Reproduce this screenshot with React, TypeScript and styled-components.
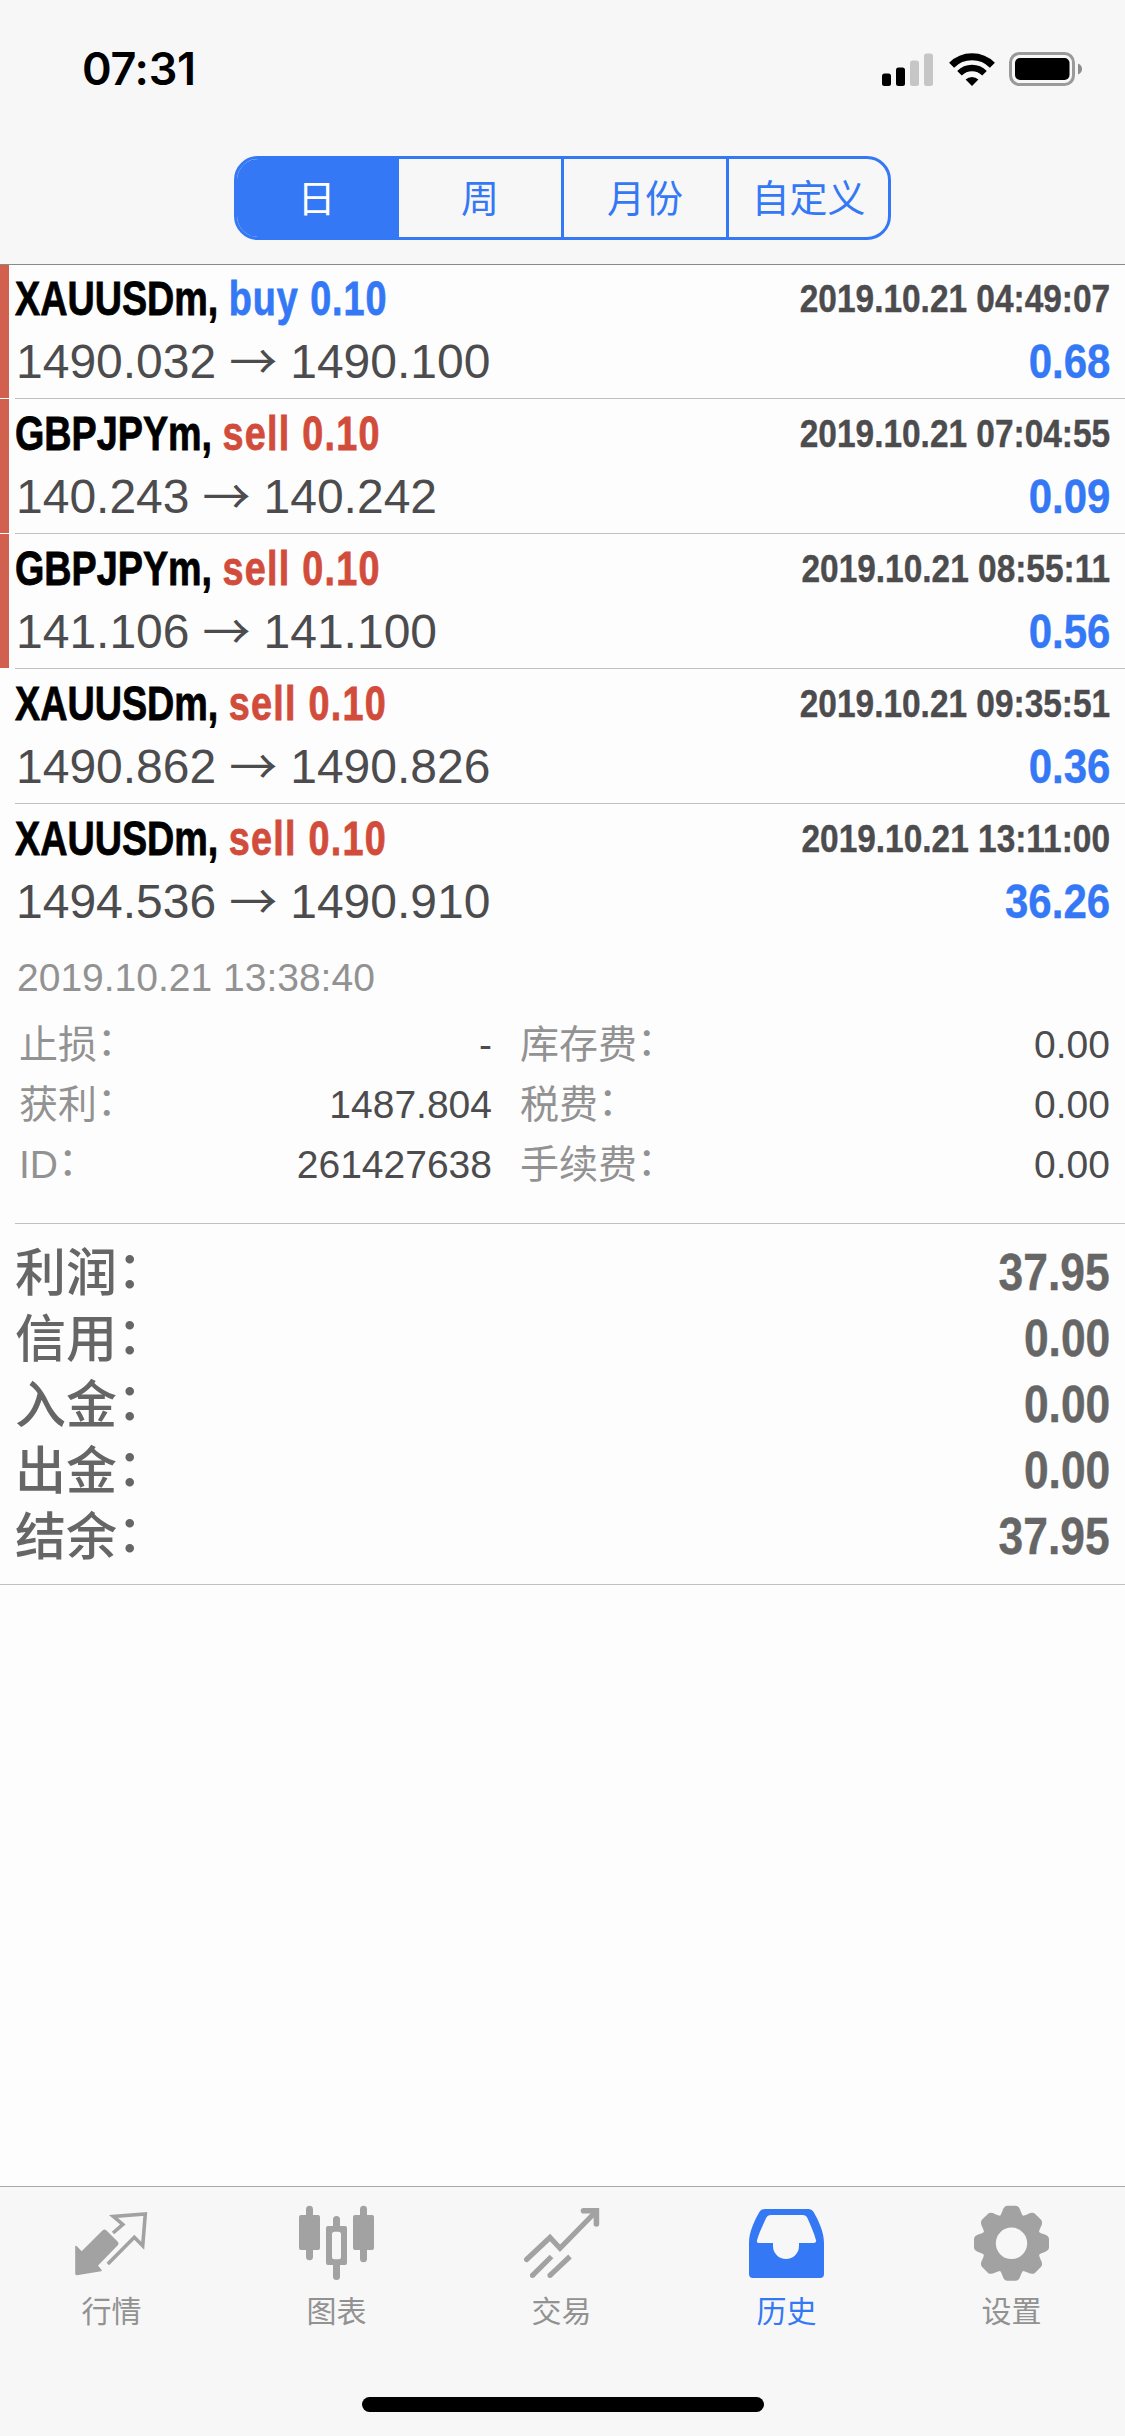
import React from "react";
import styled, { createGlobalStyle } from "styled-components";

const BLUE = "#3478f6";
const RED = "#d24c3b";
const LATIN = `"Liberation Sans", "Noto Sans CJK SC", sans-serif`;
const CJK = `"Noto Sans CJK SC", "Liberation Sans", sans-serif`;

const GlobalStyle = createGlobalStyle`
  html, body { margin: 0; padding: 0; background: #fdfdfd; }
  * { box-sizing: border-box; }
`;

const Screen = styled.div`
  display: flex;
  flex-direction: column;
  width: 1125px;
  height: 2436px;
  background: #fdfdfd;
  font-family: ${LATIN};
  overflow: hidden;
`;

const Header = styled.header`
  position: relative;
  z-index: 1;
  flex: none;
  height: 264px;
  background: #f7f7f7;
  box-shadow: 0 1px 0 #8a8a8a;
  display: flex;
  flex-direction: column;
  align-items: center;
`;

const StatusBar = styled.div`
  width: 100%;
  height: 156px;
  padding: 41px 42px 0 82px;
  display: flex;
  justify-content: space-between;
  align-items: flex-start;
`;

const Clock = styled.div`
  font: 600 45px/56px Inter, "Liberation Sans", sans-serif;
  letter-spacing: -0.3px;
  color: #000;
`;

const StatusIcons = styled.div`
  display: flex;
  align-items: flex-end;
  gap: 14.5px;
  padding-top: 11px;
  svg { display: block; }
`;

const Segments = styled.div`
  display: grid;
  grid-template-columns: 159px 165px 165px 162px;
  width: 657px;
  height: 84px;
  border: 3px solid ${BLUE};
  border-radius: 24px;
  overflow: hidden;
`;

const Segment = styled.button<{ $active?: boolean }>`
  border: 0;
  padding: 0 0 5px;
  font: 400 38px/1 ${CJK};
  color: ${(p) => (p.$active ? "#fff" : BLUE)};
  background: ${(p) => (p.$active ? BLUE : "transparent")};
  & + & { border-left: 3px solid ${BLUE}; }
`;

const List = styled.main`
  flex: 1;
  display: flex;
  flex-direction: column;
`;

const DealRow = styled.article<{ $marked?: boolean; $open?: boolean }>`
  flex: none;
  height: ${(p) => (p.$open ? 420 : 135)}px;
  display: flex;
  &::before {
    content: "";
    width: 9px;
    height: 134px;
    background: ${(p) => (p.$marked ? "#d2604f" : "transparent")};
  }
`;

const DealBody = styled.div`
  flex: 1;
  margin-left: 6px;
  padding: 3px 15px 0 0;
  border-bottom: 1px solid #c0c0c0;
`;

const Line = styled.div`
  height: 63px;
  display: flex;
  justify-content: space-between;
  line-height: 63px;
  white-space: nowrap;
`;

const Symbol = styled.div`
  font-size: 48px;
  font-weight: 700;
  color: #000;
  -webkit-text-stroke: 0.8px;
  transform: scaleX(0.786);
  transform-origin: 0 50%;
`;

const Side = styled.span<{ $buy?: boolean }>`
  color: ${(p) => (p.$buy ? BLUE : RED)};
  letter-spacing: ${(p) => (p.$buy ? 1.2 : 1.6)}px;
`;

const Condensed = styled.div<{ $size: number; $color: string; $scale: number }>`
  font-size: ${(p) => p.$size}px;
  font-weight: 700;
  color: ${(p) => p.$color};
  -webkit-text-stroke: 0.4px;
  transform: scaleX(${(p) => p.$scale});
  transform-origin: 100% 50%;
`;

const Prices = styled.div`
  display: flex;
  gap: 13px;
  padding-left: 1px;
  font-size: 48px;
  color: #4c4c4e;
`;

const Arrow = styled.span`
  width: 48px;
  height: 56px;
  line-height: 56px;
  font-family: ${CJK};
`;

const OpenTime = styled.div`
  margin-top: 15px;
  padding-left: 2px;
  height: 60px;
  font-size: 39px;
  line-height: 60px;
  color: #929292;
`;

const Details = styled.dl`
  margin: 7px 0 0;
  padding-left: 4px;
  display: grid;
  grid-template-columns: 473px 1fr;
  column-gap: 28px;
`;

const Detail = styled.div`
  display: flex;
  justify-content: space-between;
  height: 60px;
  line-height: 60px;
  font-size: 39px;
`;

const Label = styled.dt`
  color: #929292;
`;

const Value = styled.dd`
  margin: 0;
  color: #4c4c4e;
`;

const Colon = styled.span<{ $lift: number }>`
  position: relative;
  top: -${(p) => p.$lift}px;
`;

const Summary = styled.section`
  height: 361px;
  padding: 16px 15px 0;
  border-bottom: 1px solid #c0c0c0;
`;

const SummaryRow = styled.div`
  height: 66px;
  line-height: 66px;
  display: flex;
  justify-content: space-between;
`;

const SummaryLabel = styled.div`
  height: 58px;
  font: 500 51px/58px ${CJK};
  color: #666;
`;

const TabBar = styled.nav`
  flex: none;
  height: 250px;
  background: #f7f7f7;
  border-top: 1px solid #a8a8a8;
  display: grid;
  grid-template-columns: repeat(5, 225px);
  grid-template-rows: 210px 15px;
`;

const Tab = styled.a<{ $active?: boolean }>`
  padding-top: 13px;
  display: flex;
  flex-direction: column;
  color: ${(p) => (p.$active ? BLUE : "#a2a2a2")};
  svg { display: block; }
`;

const TabLabel = styled.span<{ $active?: boolean }>`
  padding-right: 2px;
  text-align: center;
  font: 400 30px/39px ${CJK};
  color: ${(p) => (p.$active ? BLUE : "#929292")};
`;

const HomeIndicator = styled.div`
  grid-column: 1 / -1;
  justify-self: center;
  width: 402px;
  height: 15px;
  border-radius: 8px;
  background: #000;
`;

const SignalIcon = () => (
  <svg width="52" height="33" viewBox="0 0 52 33">
    <rect x="0" y="20.5" width="9" height="12.5" rx="2.5" />
    <rect x="14" y="14.5" width="9" height="18.5" rx="2.5" />
    <rect x="28" y="7.5" width="9" height="25.5" rx="2.5" fill="#c6c6c6" />
    <rect x="42" y="0.5" width="9" height="32.5" rx="2.5" fill="#c6c6c6" />
  </svg>
);

const WifiIcon = () => (
  <svg width="46" height="33" viewBox="0 0 46 33">
    <g fill="none" stroke="#000">
      <path d="M2.6 12.2a28.8 28.8 0 0 1 40.8 0" strokeWidth="7" />
      <path d="M10.5 20.200a17.600 17.600 0 0 1 25 0" strokeWidth="6.400" />
    </g>
    <path d="M23 33l-6.4-6.4a9 9 0 0 1 12.8 0z" />
  </svg>
);

const BatteryIcon = () => (
  <svg width="74" height="34" viewBox="0 0 74 34">
    <rect x="1.5" y="1.5" width="63" height="31" rx="9" fill="none" stroke="#9a9a9a" strokeWidth="3" />
    <rect x="6" y="6" width="54.5" height="22" rx="5" />
    <path d="M69 11.5q4 1.8 4 5.5t-4 5.5z" fill="#8c8c8c" />
  </svg>
);

const QuotesIcon = () => (
  <svg width="225" height="90" viewBox="0 0 225 90">
    <path
      d="M76 46.6l5.7 5.6 21.6-21.4q1.2-1 2.4 0l11.5 11.6q1.1 1.2 0 2.4L97 65.5l4 4.9-24.2 4q-.8 0-.8-.8z"
      fill="currentColor" stroke="currentColor" strokeWidth="1.6" strokeLinejoin="round"
    />
    <path d="M113 33l9.8-8.6-9.4-8L145.300 13.900 142.700 45.700 134.300 37.300 107.800 64" fill="none" stroke="currentColor" strokeWidth="3.6" />
  </svg>
);

const ChartIcon = () => (
  <svg width="225" height="90" viewBox="0 0 225 90" fill="currentColor">
    <rect x="74" y="15" width="21" height="35" rx="2" />
    <rect x="81" y="5.700" width="7" height="54.500" rx="3.500" />
    <rect x="128" y="15" width="21" height="35" rx="2" />
    <rect x="135" y="5.700" width="7" height="56.500" rx="3.500" />
    <path d="M103 26h5v-6.500a3.500 3.500 0 0 1 7 0V26h5a2 2 0 0 1 2 2v35a2 2 0 0 1-2 2h-5v11.500a3.500 3.500 0 0 1-7 0V65h-5a2 2 0 0 1-2-2V28a2 2 0 0 1 2-2zm6.500 5.700a2.500 2.500 0 0 0-2.500 2.500v22.600a2.500 2.500 0 0 0 2.500 2.500h4a2.500 2.500 0 0 0 2.500-2.500V34.200a2.500 2.500 0 0 0-2.500-2.500z" fillRule="evenodd" />
  </svg>
);

const TradeIcon = () => (
  <svg width="225" height="90" viewBox="0 0 225 90" fill="none" stroke="currentColor" strokeWidth="5.200">
    <path d="M76.600 59.500L100 37.500 110 48.200 145.500 12" strokeLinecap="round" />
    <path d="M133.500 10.700H146.400V24" strokeLinecap="round" strokeWidth="5.600" />
    <path d="M82.500 75.300L101.500 56.500M100 75.300L120 56.500" />
    <path d="M82.500 75.300h.01M100 75.300h.01" strokeLinecap="round" />
  </svg>
);

const HistoryIcon = () => (
  <svg width="225" height="90" viewBox="0 0 225 90" fill="currentColor" fillRule="evenodd">
    <path d="M90 9H133.500Q136.800 9 138.300 11.600C143.500 20.500 149 32 149 43V74Q149 78 145 78H78Q74 78 74 74V43C74 32 79.500 20.500 84.700 11.600Q86.200 9 90 9ZM96 15Q92.600 15 91 18.300C87.500 26 84 33 82 40.300Q81.500 43 84 43H98V46A13 13 0 0 0 124 46V43H138.500Q141.700 43 141 40.300C139 33 136 26 132.500 18.300Q131 15 127.500 15Z" />
  </svg>
);

const TEETH = [0, 45, 90, 135, 180, 225, 270, 315];

const gearOutline = () => {
  const points: [number, number][] = [
    [-11.4, -27.6], [-10.2, -29], [-9.2, -32],
    [-7.6, -37.5], [-4, -37.5],
    [4, -37.5], [7.6, -37.5], [9.2, -32],
    [10.2, -29], [11.4, -27.6],
  ];
  let d = "";
  TEETH.forEach((deg, i) => {
    const a = (deg * Math.PI) / 180;
    const p = points.map(([x, y]) =>
      `${(111.5 + x * Math.cos(a) - y * Math.sin(a)).toFixed(2)} ${(43.3 + x * Math.sin(a) + y * Math.cos(a)).toFixed(2)}`
    );
    d += `${i ? "L" : "M"}${p[0]}Q${p[1]} ${p[2]}Q${p[3]} ${p[4]}L${p[5]}Q${p[6]} ${p[7]}Q${p[8]} ${p[9]}`;
  });
  return `${d}ZM95.800 43.300a15.700 15.700 0 1 0 31.400 0a15.700 15.700 0 1 0-31.400 0Z`;
};

const SettingsIcon = () => (
  <svg width="225" height="90" viewBox="0 0 225 90" fill="currentColor" fillRule="evenodd">
    <path d={gearOutline()} />
  </svg>
);

type Deal = {
  symbol: string; side: "buy" | "sell"; from: string; to: string;
  time: string; profit: string; marked?: boolean; open?: boolean;
};

const DEALS: Deal[] = [
  { symbol: "XAUUSDm", side: "buy", from: "1490.032", to: "1490.100", time: "2019.10.21 04:49:07", profit: "0.68", marked: true },
  { symbol: "GBPJPYm", side: "sell", from: "140.243", to: "140.242", time: "2019.10.21 07:04:55", profit: "0.09", marked: true },
  { symbol: "GBPJPYm", side: "sell", from: "141.106", to: "141.100", time: "2019.10.21 08:55:11", profit: "0.56", marked: true },
  { symbol: "XAUUSDm", side: "sell", from: "1490.862", to: "1490.826", time: "2019.10.21 09:35:51", profit: "0.36" },
  { symbol: "XAUUSDm", side: "sell", from: "1494.536", to: "1490.910", time: "2019.10.21 13:11:00", profit: "36.26", open: true },
];

const DETAILS = [
  ["止损", "-"], ["库存费", "0.00"],
  ["获利", "1487.804"], ["税费", "0.00"],
  ["ID", "261427638"], ["手续费", "0.00"],
];

const TOTALS = [
  ["利润", "37.95"], ["信用", "0.00"], ["入金", "0.00"], ["出金", "0.00"], ["结余", "37.95"],
];

const TABS = [
  { label: "行情", Icon: QuotesIcon },
  { label: "图表", Icon: ChartIcon },
  { label: "交易", Icon: TradeIcon },
  { label: "历史", Icon: HistoryIcon, active: true },
  { label: "设置", Icon: SettingsIcon },
];

export default function App() {
  return (
    <Screen>
      <GlobalStyle />
      <Header>
        <StatusBar>
          <Clock>07:31</Clock>
          <StatusIcons>
            <SignalIcon />
            <WifiIcon />
            <BatteryIcon />
          </StatusIcons>
        </StatusBar>
        <Segments>
          {["日", "周", "月份", "自定义"].map((name, i) => (
            <Segment key={name} $active={i === 0}>{name}</Segment>
          ))}
        </Segments>
      </Header>
      <List>
        {DEALS.map((d) => (
          <DealRow key={d.time} $marked={d.marked} $open={d.open}>
            <DealBody>
              <Line>
                <Symbol>
                  {d.symbol}, <Side $buy={d.side === "buy"}>{d.side} 0.10</Side>
                </Symbol>
                <Condensed $size={39} $color="#4c4c4e" $scale={0.857}>{d.time}</Condensed>
              </Line>
              <Line>
                <Prices>
                  <span>{d.from}</span>
                  <Arrow>→</Arrow>
                  <span>{d.to}</span>
                </Prices>
                <Condensed $size={48} $color={BLUE} $scale={0.875}>{d.profit}</Condensed>
              </Line>
              {d.open && (
                <>
                  <OpenTime>2019.10.21 13:38:40</OpenTime>
                  <Details>
                    {DETAILS.map(([label, value]) => (
                      <Detail key={label}>
                        <Label>{label}<Colon $lift={3}>：</Colon></Label>
                        <Value>{value}</Value>
                      </Detail>
                    ))}
                  </Details>
                </>
              )}
            </DealBody>
          </DealRow>
        ))}
        <Summary>
          {TOTALS.map(([label, value]) => (
            <SummaryRow key={label}>
              <SummaryLabel>{label}<Colon $lift={3}>：</Colon></SummaryLabel>
              <Condensed $size={51} $color="#666" $scale={0.87}>{value}</Condensed>
            </SummaryRow>
          ))}
        </Summary>
      </List>
      <TabBar>
        {TABS.map(({ label, Icon, active }) => (
          <Tab key={label} $active={active}>
            <Icon />
            <TabLabel $active={active}>{label}</TabLabel>
          </Tab>
        ))}
        <HomeIndicator />
      </TabBar>
    </Screen>
  );
}
